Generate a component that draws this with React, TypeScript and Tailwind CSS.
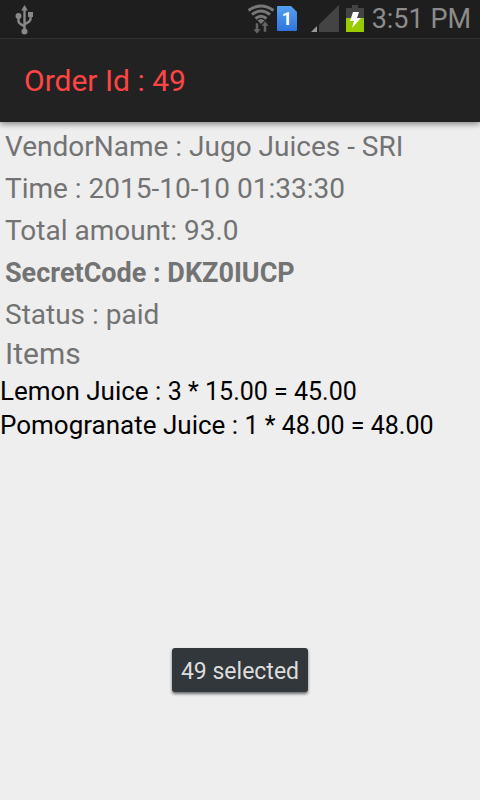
import React from "react";

const details = [
  { label: "VendorName : Jugo Juices - SRI", style: "text-[28px]" },
  { label: "Time : 2015-10-10 01:33:30", style: "text-[28px]" },
  { label: "Total amount: 93.0", style: "text-[28px]" },
  { label: "SecretCode : DKZ0IUCP", style: "text-[27px] font-bold" },
  { label: "Status : paid", style: "text-[28px]" },
];

const items = [
  { name: "Lemon Juice :", total: "3 * 15.00 = 45.00" },
  { name: "Pomogranate Juice :", total: "1 * 48.00 = 48.00" },
];

function UsbIcon() {
  return (
    <svg width="20" height="32" viewBox="0 0 20 32" fill="none" stroke="#888888" strokeWidth="2.4" aria-label="USB connected">
      <path d="M9.5 6v22M9.5 24c0-2-6-2-6-6v-5M9.5 22c0-2 6-2 6-6v-4" />
      <circle cx="9.5" cy="28.5" r="3" fill="#888888" stroke="none" />
      <circle cx="3.5" cy="13" r="3" fill="#888888" stroke="none" />
      <path d="M13 9h5v5h-5zM9.5 2l3.3 5.5H6.2z" fill="#888888" stroke="none" />
    </svg>
  );
}

function WifiIcon() {
  return (
    <svg width="28" height="30" viewBox="0 0 28 30" fill="none" stroke="#777777" strokeWidth="3" aria-label="Wi-Fi">
      <path d="M1.5 6.5q12.500-9 25 0M5 10.500q9-7 18 0M8.500 14.500q5.500-4.500 11 0" />
      <path d="M10.500 16.500q3.500-3 7 0l-3.500 3.500z" fill="#777777" stroke="none" />
      <path d="M8.500 19h3v6h2.500l-4 5-4-5h2.500zM16.500 28v-6H14l4-5 4 5h-2.500v6z" fill="#646464" stroke="#1e1e1e" strokeWidth="0.5" />
    </svg>
  );
}

function SimIcon() {
  return (
    <svg width="20" height="26" viewBox="0 0 20 26" aria-label="SIM 1">
      <defs>
        <linearGradient id="sim" x1="0" y1="0" x2="0" y2="1">
          <stop offset="0" stopColor="#55a0f0" />
          <stop offset="1" stopColor="#2f74dc" />
        </linearGradient>
      </defs>
      <path d="M1 0h13l6 6v18q0 1-1 1H1q-1 0-1-1V1q0-1 1-1z" fill="url(#sim)" />
      <text x="10" y="19" textAnchor="middle" fontSize="18" fontWeight="700" fill="#ffffff">1</text>
    </svg>
  );
}

function SignalIcon() {
  return (
    <svg width="28" height="28" viewBox="0 0 28 28" aria-label="Signal strength">
      <path d="M28 0v27H8V19.500z" fill="#444444" />
      <path d="M6 21v6H0z" fill="#999999" />
    </svg>
  );
}

function BatteryIcon() {
  return (
    <svg width="18" height="28" viewBox="0 0 18 28" aria-label="Battery charging">
      <path d="M6 0h6v3h6v10H0V3h6z" fill="#444444" />
      <path d="M0 13h18v14H0z" fill="#99cc00" />
      <path d="M7 7h6l-2 6h4L6 23l2-7H4z" fill="#ffffff" />
    </svg>
  );
}

export default function App() {
  return (
    <div className="relative min-h-screen bg-[#eeeeee] font-['Roboto',sans-serif] text-[#737373]">
      <div className="flex h-[38px] items-center justify-between bg-[#1e1e1e] pr-[9px] pl-[15px] text-[27px] text-[#8c8c8c]">
        <UsbIcon />
        <div className="flex items-center">
          <WifiIcon />
          <span className="ml-[2px]"><SimIcon /></span>
          <span className="ml-[14px]"><SignalIcon /></span>
          <span className="ml-[7px]"><BatteryIcon /></span>
          <time className="ml-2">3:51 PM</time>
        </div>
      </div>
      <header className="flex h-[84px] items-center border-t border-[#333333] bg-[#222222] px-6 shadow-[0_2px_6px_rgba(0,0,0,0.45)]">
        <h1 className="text-[30px] text-[#ff4444]">Order Id : 49</h1>
      </header>
      <main className="pt-1">
        {details.map((d) => (
          <p key={d.label} className={`px-[5px] leading-[42px] ${d.style}`}>{d.label}</p>
        ))}
        <h2 className="mb-[2px] px-[5px] text-[30px] leading-[36px]">Items</h2>
        <ul className="text-[26px] leading-[34px] text-black">
          {items.map((i) => (
            <li key={i.name}>
              {i.name} <span className="text-[25px] leading-none">{i.total}</span>
            </li>
          ))}
        </ul>
      </main>
      <div className="absolute inset-x-0 bottom-[108px] flex justify-center">
        <div role="status" className="rounded-[3px] bg-[#31373a] px-[9px] pt-1 text-[23px] leading-[40px] text-[#dddddd] shadow-[0_2px_3px_rgba(0,0,0,0.55)]">
          49 selected
        </div>
      </div>
    </div>
  );
}
